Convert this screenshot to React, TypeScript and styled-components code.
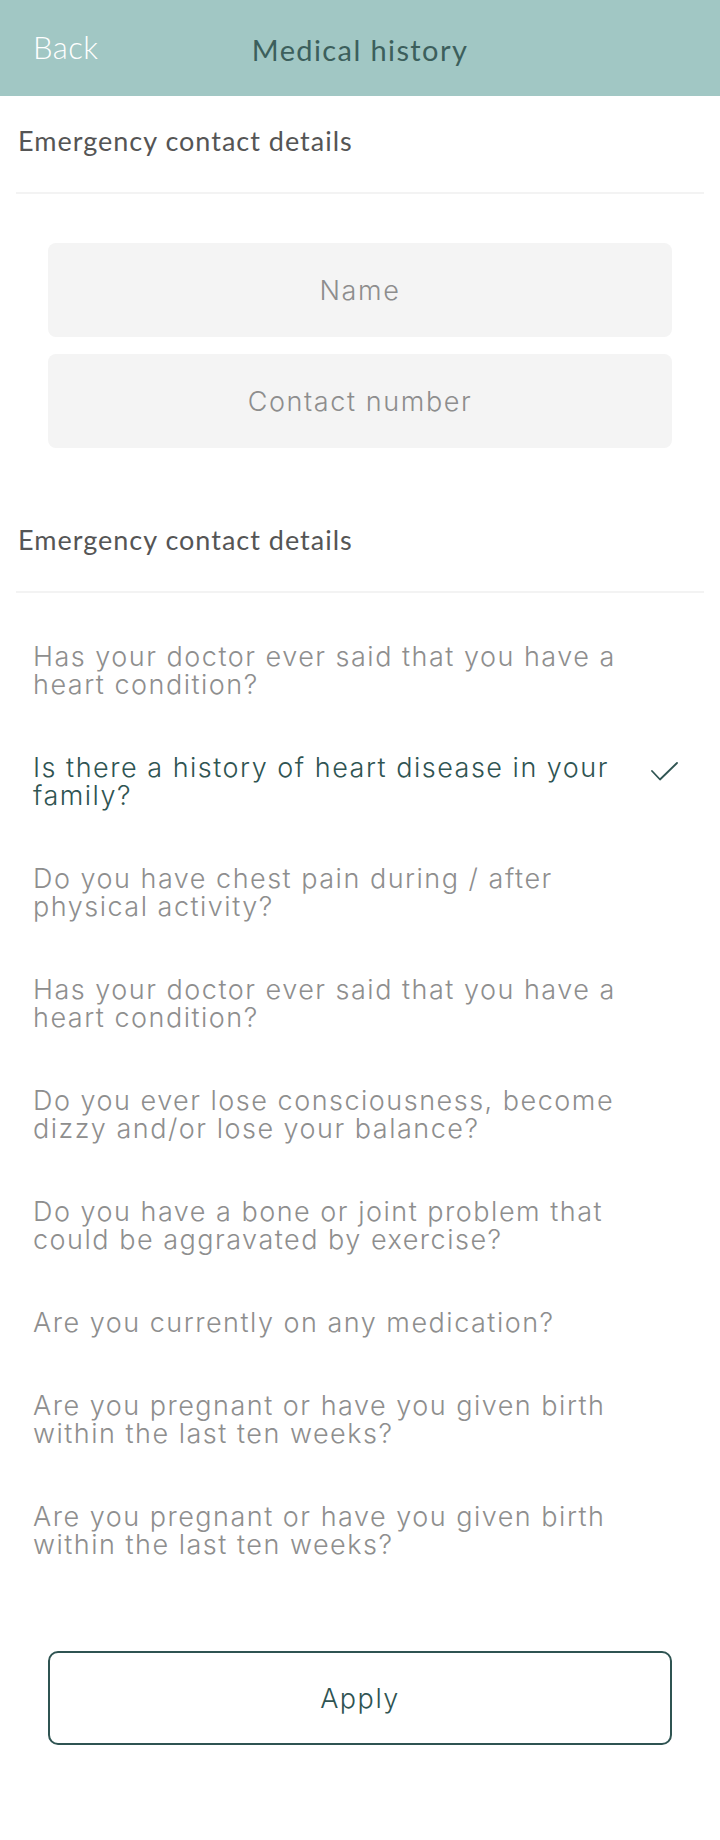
import React from "react";
import styled, { createGlobalStyle } from "styled-components";

const GlobalStyle = createGlobalStyle`
  html, body {
    margin: 0;
    padding: 0;
    background: #ffffff;
  }
  * { box-sizing: border-box; }
`;

const Page = styled.div`
  width: 720px;
  min-height: 1840px;
  background: #ffffff;
  display: flex;
  flex-direction: column;
`;

const TopBar = styled.header`
  height: 96px;
  background: #a1c7c4;
  display: grid;
  grid-template-columns: 1fr auto 1fr;
  align-items: center;
  padding: 0 33px;
`;

const BackLink = styled.button`
  justify-self: start;
  background: none;
  border: none;
  padding: 0;
  margin-top: -3px;
  font-family: Lato, "Liberation Sans", sans-serif;
  font-weight: 300;
  font-size: 31px;
  letter-spacing: 0.4px;
  color: #ffffff;
  cursor: pointer;
`;

const Title = styled.h1`
  margin: 2px 0 0 0;
  font-family: Lato, "Liberation Sans", sans-serif;
  font-weight: 400;
  font-size: 29px;
  color: #3c5f5c;
  letter-spacing: 1.4px;
`;

const SectionHeader = styled.h2`
  margin: 0 16px;
  height: 98px;
  padding: 0 0 7px 2px;
  display: flex;
  align-items: center;
  border-bottom: 2px solid #f3f3f3;
  font-family: Lato, "Liberation Sans", sans-serif;
  font-weight: 400;
  font-size: 27px;
  letter-spacing: 1px;
  color: #555555;
`;

const Fields = styled.div`
  display: flex;
  flex-direction: column;
  gap: 17px;
  padding: 49px 48px 47px;
`;

const Field = styled.input`
  height: 94px;
  width: 100%;
  border: none;
  border-radius: 8px;
  background: #f4f4f4;
  text-align: center;
  font-family: Inter, "Liberation Sans", sans-serif;
  font-weight: 300;
  font-size: 27px;
  letter-spacing: 1.6px;
  color: #555555;
  outline: none;
  &::placeholder {
    color: #8d8d8d;
  }
`;

const QuestionList = styled.ul`
  list-style: none;
  margin: 0;
  padding: 23px 0 0 0;
`;

const QuestionRow = styled.li<{ $selected?: boolean }>`
  display: flex;
  align-items: flex-start;
  gap: 18px;
  padding: 27px 42px 28px 33px;
  font-family: Inter, "Liberation Sans", sans-serif;
  font-weight: 300;
  font-size: 27px;
  line-height: 28px;
  letter-spacing: 1.5px;
  color: ${(p) => (p.$selected ? "#2f5452" : "#8e8e8e")};
`;

const QuestionText = styled.span`
  flex: 1;
`;

const CheckSlot = styled.span`
  width: 27px;
  height: 19px;
  margin-top: 8px;
  flex-shrink: 0;
  display: flex;
`;

const Footer = styled.div`
  padding: 64px 48px 95px;
`;

const ApplyButton = styled.button`
  width: 100%;
  height: 94px;
  background: #ffffff;
  border: 2px solid #2f5452;
  border-radius: 10px;
  font-family: Inter, "Liberation Sans", sans-serif;
  font-weight: 300;
  font-size: 27px;
  letter-spacing: 1.5px;
  color: #2f5452;
  cursor: pointer;
`;

const Check = () => (
  <svg width="27" height="19" viewBox="0 0 27 19" fill="none">
    <polyline
      points="1,9 9,17.5 26,1"
      stroke="#2f5452"
      strokeWidth="1.8"
      strokeLinecap="round"
      strokeLinejoin="round"
    />
  </svg>
);

const questions: { text: string; selected?: boolean }[] = [
  { text: "Has your doctor ever said that you have a heart condition?" },
  { text: "Is there a history of heart disease in your family?", selected: true },
  { text: "Do you have chest pain during / after physical activity?" },
  { text: "Has your doctor ever said that you have a heart condition?" },
  { text: "Do you ever lose consciousness, become dizzy and/or lose your balance?" },
  { text: "Do you have a bone or joint problem that could be aggravated by exercise?" },
  { text: "Are you currently on any medication?" },
  { text: "Are you pregnant or have you given birth within the last ten weeks?" },
  { text: "Are you pregnant or have you given birth within the last ten weeks?" },
];

export default function App() {
  return (
    <>
      <GlobalStyle />
      <Page>
        <TopBar>
          <BackLink>Back</BackLink>
          <Title>Medical history</Title>
          <span />
        </TopBar>
        <SectionHeader>Emergency contact details</SectionHeader>
        <Fields>
          <Field placeholder="Name" />
          <Field placeholder="Contact number" />
        </Fields>
        <SectionHeader>Emergency contact details</SectionHeader>
        <QuestionList>
          {questions.map((q, i) => (
            <QuestionRow key={i} $selected={q.selected}>
              <QuestionText>{q.text}</QuestionText>
              <CheckSlot>{q.selected && <Check />}</CheckSlot>
            </QuestionRow>
          ))}
        </QuestionList>
        <Footer>
          <ApplyButton>Apply</ApplyButton>
        </Footer>
      </Page>
    </>
  );
}
